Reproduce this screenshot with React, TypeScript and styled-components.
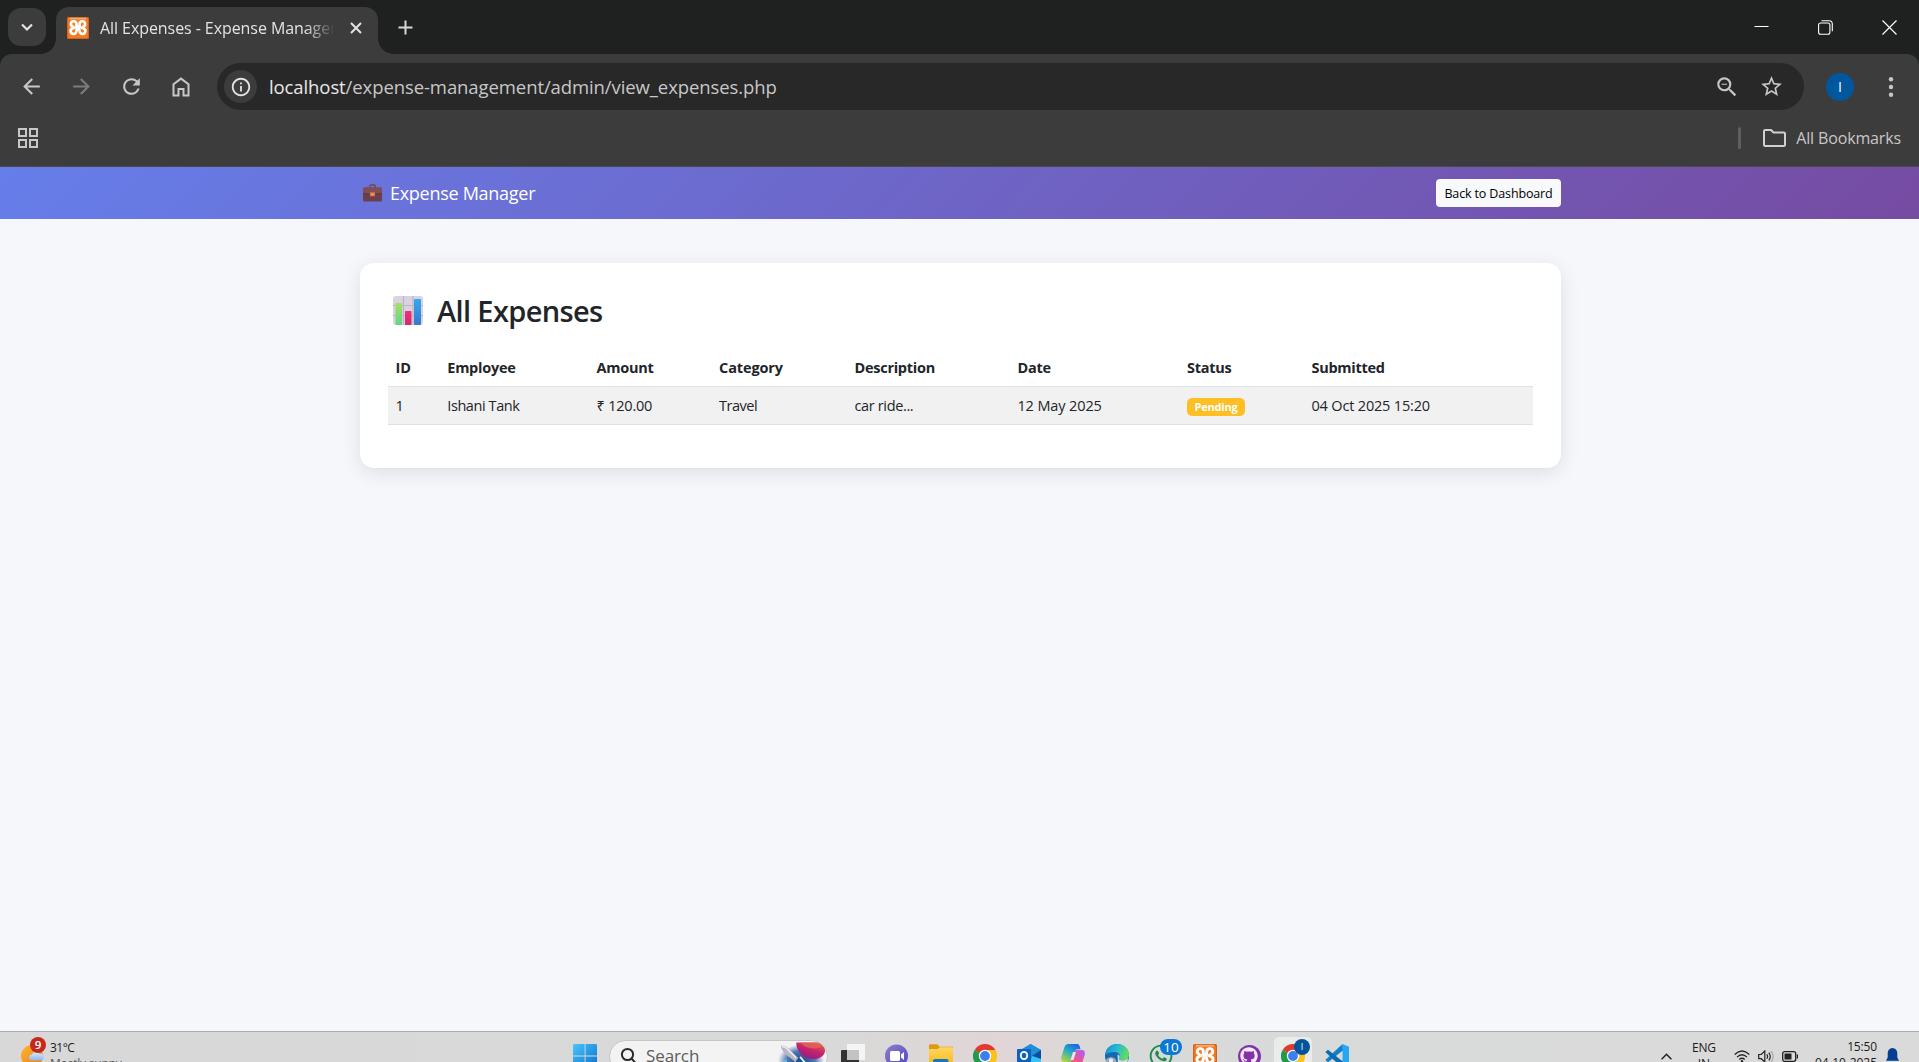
import React from "react";
import styled, { createGlobalStyle, css } from "styled-components";
import { MdArrowBack, MdArrowForward, MdRefresh, MdZoomOut, MdStarBorder, MdInfoOutline } from "react-icons/md";
import { FaGithub, FaWhatsapp } from "react-icons/fa";

const Global = createGlobalStyle`
  * { box-sizing: border-box; }
  body { margin: 0; background: #f5f7fb; font-family: "Open Sans", "Noto Sans", sans-serif; overflow: hidden; }
`;
const Screen = styled.div`
  display: flex; flex-direction: column; width: 1919px; height: 1062px; overflow: hidden;
`;
const Text = styled.span<{ $size: number; $ls?: number; $color?: string; $weight?: number }>`
  font-size: ${p => p.$size}px;
  letter-spacing: ${p => p.$ls ?? 0}px;
  color: ${p => p.$color ?? "inherit"};
  font-weight: ${p => p.$weight ?? 400};
  white-space: nowrap;
`;

/* ---------- browser chrome ---------- */
const TabStrip = styled.div`
  display: flex; height: 54px; flex: none; background: #1f2120; padding: 7px 0 0 8px; color: #e3e3e3;
`;
const TabSearch = styled.div`
  width: 38px; height: 38px; margin-top: 1px; border-radius: 13px; background: #3c3c3c;
  display: flex; align-items: center; justify-content: center;
`;
const Tab = styled.div`
  position: relative; width: 322px; height: 47px; margin-left: 10px; padding: 0 16px 6px 11px; background: #3c3c3c;
  border-radius: 13px 13px 0 0; display: flex; align-items: center;
  &::before, &::after {
    content: ""; position: absolute; bottom: 0; width: 15px; height: 15px;
  }
  &::before { left: -15px; background: radial-gradient(circle at 0 0, transparent 14.5px, #3c3c3c 15px); }
  &::after { right: -15px; background: radial-gradient(circle at 100% 0, transparent 14.5px, #3c3c3c 15px); }
`;
const TabTitle = styled.div`
  width: 233px; margin-left: 11px; overflow: hidden; white-space: nowrap; line-height: 24px;
  mask-image: linear-gradient(90deg, #000 205px, transparent 235px);
`;
const TabClose = styled.div`margin-left: auto; display: flex;`;
const NewTab = styled.div`display: flex; height: 40px; align-items: center; margin-left: 20px;`;
const WindowButtons = styled.div`
  margin-left: auto; display: flex; height: 40px; align-items: center; gap: 49px; padding-right: 22px; color: #fff;
`;
const ToolbarWrap = styled.div`
  flex: none; height: 113px; background: linear-gradient(#1f2120 16px, #3c3c3c 16px);
`;
const ToolbarBody = styled.div`
  height: 113px; background: #3c3c3c; border-radius: 12px 12px 0 0; border-bottom: 1px solid #4a4a4a; padding-top: 9px;
`;
const Toolbar = styled.div`display: flex; align-items: center; height: 47px; color: #c7c7c7;`;
const NavButtons = styled.div`
  display: flex; align-items: center; gap: 25px; width: 217px; padding-left: 18.5px;
  svg:nth-child(2) { color: #7c7c7c; }
`;
const Omnibox = styled.div`
  width: 1587px; height: 47px; border-radius: 24px; background: #282828; display: flex; align-items: center; padding: 0 20px 0 7px;
`;
const SiteInfo = styled.div`
  width: 33px; height: 33px; border-radius: 50%; background: #3c3c3c; color: #e3e3e3; display: flex;
  align-items: center; justify-content: center; margin-right: 12px; padding-left: 1px;
`;
const OmniActions = styled.div`margin-left: auto; display: flex; gap: 19px; align-items: center;`;
const Avatar = styled.div`
  width: 28px; height: 28px; border-radius: 50%; margin-left: 22px; background: #00579e; color: #fff;
  display: flex; align-items: center; justify-content: center;
`;
const Menu = styled.div`display: flex; margin-left: 20px;`;
const Bookmarks = styled.div`
  display: flex; align-items: center; height: 56px; padding: 0 18px; color: #c7c7c7;
`;
const BookmarkRight = styled.div`margin-left: auto; display: flex; align-items: center;`;
const Divider = styled.div`width: 3px; height: 22px; border-radius: 2px; background: #5f5f5f; margin-right: 22px;`;
const BookmarkLabel = styled.div`margin-left: 10.5px; line-height: 24px;`;

/* ---------- page ---------- */
const NavBar = styled.header`
  flex: none; height: 52px; background: linear-gradient(135deg, #667eea 0%, #764ba2 100%);
  display: flex; align-items: center; padding: 0 358px 0 363px;
`;
const Brand = styled.div`display: flex; align-items: center; gap: 8px; color: #fff;`;
const BackButton = styled.button`
  margin-left: auto; width: 125px; height: 28px; border: 0; border-radius: 4px; background: #f8f9fa; color: #000;
  font-family: inherit; padding: 2px 0 0; display: flex; align-items: center; justify-content: center; line-height: 20px;
`;
const Main = styled.main`flex: 1; min-height: 0; padding: 44px 358px 0 360px; color: #212529;`;
const Card = styled.section`
  height: 205px; border-radius: 14px; background: #fff; box-shadow: 0 5px 20px rgba(0, 0, 0, 0.1); padding: 28px;
`;
const Heading = styled.h2`
  display: flex; align-items: center; gap: 14px; margin: 0; height: 40px; padding-left: 5px; line-height: 40px; font-weight: 600;
`;
const Table = styled.div`margin-top: 14px;`;
const Row = styled.div<{ $body?: boolean }>`
  display: grid; grid-template-columns: 51.7px 149.2px 122.6px 135.4px 163px 169.6px 124.4px 1fr;
  height: 38px; align-items: center; border-bottom: 1px solid #dee2e6; padding-left: 7.6px; line-height: 22px;
  ${p => p.$body && css`background: #f1f1f1;`}
  ${p => !p.$body && css`height: 42px; padding-top: 4px;`}
`;
const Badge = styled.div`
  display: flex; width: 58px; height: 18px; margin-top: 3px; border-radius: 5px; background: #fdbf23; color: #fff;
  align-items: center; justify-content: center; line-height: 16px;
`;

/* ---------- taskbar ---------- */
const Taskbar = styled.footer`
  flex: none; height: 31px; overflow: hidden; border-top: 1px solid #a9abac;
  background: linear-gradient(90deg, #d8d8d8 0%, #d8d9d8 44%, #e1d5d6 52%, #d8dad9 59%, #dadada 100%);
`;
const TaskInner = styled.div`display: flex; height: 48px; align-items: center; color: #1b1b1b;`;
const Weather = styled.div`display: flex; width: 573px; padding-left: 20px; gap: 5px; align-items: center;`;
const WeatherIcon = styled.div`position: relative; width: 25px; height: 26px;`;
const WeatherBadge = styled.div`
  position: absolute; left: 10px; top: -6px; width: 16px; height: 16px; border-radius: 50%; background: #c4291c; color: #fff;
  display: flex; align-items: center; justify-content: center; line-height: 14px;
`;
const Stack = styled.div<{ $align?: string; $up?: number }>`
  display: flex; flex-direction: column; line-height: 16px; margin-top: ${p => -(p.$up ?? 1)}px; align-items: ${p => p.$align ?? "flex-start"};
`;
const SearchPill = styled.div`
  width: 219px; height: 33px; margin-left: 12px; border-radius: 17px; background: #f3f3f3; border: 1px solid #c6c6c6;
  display: flex; align-items: center; padding-left: 10px; overflow: hidden; line-height: 24px;
`;
const SearchLabel = styled.div`margin: 0 0 0 10px;`;
const SearchArt = styled.div`margin-left: auto; display: flex;`;
const Apps = styled.div`display: flex; margin-left: 3px;`;
const AppSlot = styled.div<{ $active?: boolean }>`
  position: relative; width: 38px; height: 39px; margin: 0 3px; display: flex; align-items: center; justify-content: center; border-radius: 5px;
  ${p => p.$active && css`background: #ebebea;`}
`;
const AppBadge = styled.div<{ $w: number; $bg: string; $right: number }>`
  position: absolute; right: ${p => p.$right}px; top: 2px; width: ${p => p.$w}px; height: 16px; border-radius: 8px; background: ${p => p.$bg};
  color: #fff; display: flex; align-items: center; justify-content: center; line-height: 14px;
`;
const WhatsappIcon = styled.div`display: flex; color: #1d8a4f;`;
const GithubIcon = styled.div`
  width: 23px; height: 23px; border-radius: 50%; background: #8430ab; color: #f3e9f7; display: flex; align-items: center; justify-content: center;
`;
const Tray = styled.div`display: flex; align-items: center; margin-left: auto; padding-right: 20px;`;
const Gap = styled.div<{ $w: number }>`width: ${p => p.$w}px;`;

/* ---------- drawings ---------- */
const Xampp = ({ s }: { s: number }) => (
  <svg width={s} height={s} viewBox="0 0 24 24">
    <rect width="24" height="24" rx="1.5" fill="#d3641d" />
    <rect x="1.2" y="1.2" width="21.600" height="21.600" rx="1" fill="#f47b20" />
    <rect x="3" y=".8" width="18" height="1.900" fill="#f3a878" />
    <g fill="none" stroke="#fff" strokeWidth="2.900" strokeLinejoin="round">
      <path d="M10.300 10.500V7.600A3 3 0 1 0 6.200 10.400L8 11.700 5.800 12.600A3.100 3.100 0 1 0 10.200 15.400L11 12.500h2l.8 2.900A3.100 3.100 0 1 0 18.200 12.600L16 11.700l1.800-1.300A3 3 0 1 0 13.700 7.600v2.900z" />
    </g>
  </svg>
);
const Chrome = () => (
  <svg width="24" height="24" viewBox="0 0 24 24">
    <path d="M12 12L1.600 6A12 12 0 0 1 22.400 6z" fill="#e03a2f" />
    <path d="M1.600 6A12 12 0 0 0 12 24l5.200-9L12 12z" fill="#229a4b" />
    <path d="M12 6h10.400A12 12 0 0 1 12 24l5.200-9z" fill="#fbc21c" />
    <circle cx="12" cy="12" r="6.200" fill="#fff" /><circle cx="12" cy="12" r="4.900" fill="#3c7ff0" />
  </svg>
);
const Briefcase = () => (
  <svg width="19" height="18" viewBox="0 0 19 18">
    <path d="M6.700 4V2.400Q6.700 1 8 1h3q1.300 0 1.300 1.400V4" fill="none" stroke="#6b4653" strokeWidth="1.300" />
    <rect y="3.500" width="19" height="14" rx="1.500" fill="#6d4049" />
    <path d="M0 5q0-1.500 1.500-1.500h16Q19 3.500 19 5v4.500q-9.500 2-19 0z" fill="#814f53" />
    <path d="M0 9.500q9.500 2 19 0" fill="none" stroke="#5b3440" />
    <rect x="7" y="8.300" width="5" height="4" rx=".6" fill="#d9774f" /><rect x="8.200" y="9.500" width="2.600" height="1.500" fill="#ef9d70" />
  </svg>
);
const BarChart = () => (
  <svg width="30" height="30" viewBox="0 0 30 30">
    <defs>
      <linearGradient id="g" x2="0" y2="1"><stop stopColor="#a8e05f" /><stop offset="1" stopColor="#5fd68c" /></linearGradient>
      <linearGradient id="b" x2="0" y2="1"><stop stopColor="#35a8f2" /><stop offset="1" stopColor="#3a78c9" /></linearGradient>
      <linearGradient id="r" x2="0" y2="1"><stop stopColor="#f0307a" /><stop offset="1" stopColor="#cf2a6c" /></linearGradient>
    </defs>
    <rect width="30" height="29" rx="3" fill="#d9d2e0" />
    <path d="M10.500 0v29M20 0v29M0 9.500h30M0 19.500h30" stroke="#bdb5c6" strokeWidth="1.200" />
    <rect x="2.500" y="7" width="6.500" height="22" rx=".8" fill="url(#g)" />
    <rect x="12" y="15" width="6.500" height="14" rx=".8" fill="url(#r)" />
    <rect x="21" y="3" width="7" height="26" rx=".8" fill="url(#b)" />
  </svg>
);
const SunCloud = () => (
  <svg width="25" height="26" viewBox="0 0 25 26">
    <defs>
      <linearGradient id="sun" x1="0" y1="0" x2="1" y2="1"><stop stopColor="#fcb72e" /><stop offset="1" stopColor="#f0761b" /></linearGradient>
      <linearGradient id="cloud" x2="0" y2="1"><stop stopColor="#dcebfd" /><stop offset="1" stopColor="#8db6ee" /></linearGradient>
    </defs>
    <circle cx="12" cy="13" r="11" fill="url(#sun)" />
    <path d="M12 17.500a3 3 0 0 1 0-6 4.200 4.200 0 0 1 7.600-.8 3.400 3.400 0 0 1 1.400 6.800z" fill="url(#cloud)" />
  </svg>
);
const WindowsLogo = () => (
  <svg width="24" height="24" viewBox="0 0 24 24">
    <defs><linearGradient id="win" x2="1" y2="1"><stop stopColor="#49c6f7" /><stop offset="1" stopColor="#0a6fd0" /></linearGradient></defs>
    <path d="M1.200 0h10.400v11.500H0V1.200Q0 0 1.200 0zM12.500 0h10.300Q24 0 24 1.200v10.300H12.500zM0 12.500h11.600V24H0zM12.500 12.500H24V24H12.500z" fill="url(#win)" />
  </svg>
);
const RocketArt = () => (
  <svg width="50" height="31" viewBox="0 0 52 31">
    <defs>
      <radialGradient id="sky"><stop stopColor="#1c4687" /><stop offset=".6" stopColor="#4d78b5" /><stop offset="1" stopColor="#f3f3f3" /></radialGradient>
      <linearGradient id="planet" x1=".8" y1="0" x2=".2" y2="1"><stop stopColor="#e8603f" /><stop offset=".45" stopColor="#c4246c" /><stop offset="1" stopColor="#8d1a86" /></linearGradient>
    </defs>
    <ellipse cx="25" cy="20" rx="24" ry="17" fill="url(#sky)" />
    <path d="M20 1h24q6 4 6 9-1 6-9 8-10 1-16-5-5-5-5-12z" fill="url(#planet)" />
    <path d="M24 1q8 9 22 5l-2-5z" fill="#e2655c" opacity=".75" />
    <path d="M4 4q6 0 10 5l8 8-3 4-9-7Q4 9 4 4z" fill="#b9b6c2" /><path d="M5 5q5 1 8 5l7 7" stroke="#ececf2" strokeWidth="1.500" fill="none" />
    <path d="M18 21l7 8M24 16l6 7" stroke="#e7ecf5" strokeWidth="2" />
    <circle cx="9" cy="20" r="1.500" fill="#5fc0c9" />
  </svg>
);
const TaskView = () => (
  <svg width="24" height="24" viewBox="0 0 24 24">
    <rect y="6" width="18" height="18" rx="1" fill="#333" /><rect x="6" width="18" height="16" rx="1" fill="#f5f5f5" />
    <rect x="6" y="6" width="12" height="10" fill="#c3c3c3" />
  </svg>
);
const VideoChat = () => (
  <svg width="24" height="24" viewBox="0 0 24 24">
    <defs><linearGradient id="vc" x2="1" y2="1"><stop stopColor="#8d7fcf" /><stop offset="1" stopColor="#4f46c0" /></linearGradient></defs>
    <circle cx="11.500" cy="12" r="11.500" fill="url(#vc)" /><rect x="5" y="7" width="10" height="10" rx="1.500" fill="#fff" /><path d="M16 10.500l3-2.500v8l-3-2.500z" fill="#fff" />
  </svg>
);
const Explorer = () => (
  <svg width="24" height="24" viewBox="0 0 24 24">
    <defs><linearGradient id="fo" x2="0" y2="1"><stop stopColor="#ffd75e" /><stop offset="1" stopColor="#f8b91f" /></linearGradient></defs>
    <path d="M0 1.500Q0 .2 1.300 .2h7l2.500 2.500H24v6H0z" fill="#dc9b12" />
    <path d="M0 6q0-1 1-1h7.500l2.300-1.800H23q1 0 1 1V21H0z" fill="url(#fo)" />
    <path d="M4 21v-4q0-2 2-2h11.500q2 0 2 2v4z" fill="#1777bb" />
  </svg>
);
const Outlook = () => (
  <svg width="24" height="24" viewBox="0 0 24 24">
    <path d="M5 5l8.500-5L24 6v15H5z" fill="#1b8ad6" /><path d="M13.500 0L24 6l-9 6-9-6z" fill="#1f8fdc" />
    <path d="M15 12l9-6v9z" fill="#0c4e9c" /><path d="M15 12l9 3v8H12z" fill="#35c1f2" />
    <rect y="5" width="14" height="14" rx="1" fill="#0a63be" />
    <ellipse cx="7" cy="11.500" rx="3.200" ry="3.600" fill="none" stroke="#fff" strokeWidth="1.900" />
  </svg>
);
const Copilot = () => (
  <svg width="24" height="24" viewBox="0 0 24 24">
    <defs>
      <linearGradient id="cpA" x1="0.800" y1="0" x2="0.200" y2="1"><stop stopColor="#1a62e0" /><stop offset=".45" stopColor="#21a9c9" /><stop offset="1" stopColor="#b7d53b" /></linearGradient>
      <linearGradient id="cpB" x1=".8" y1="0" x2=".2" y2="1"><stop stopColor="#b05ff0" /><stop offset=".5" stopColor="#f0528f" /><stop offset="1" stopColor="#fb9a4a" /></linearGradient>
    </defs>
    <path d="M7.500 0h8.500q2 0 2.700 2.200l.8 3h-3q-2 0-2.700 2.300l-2.500 8Q10.500 18 8.500 18H3.300Q-.7 18 .3 13L3.500 3Q4.500 0 7.500 0z" fill="url(#cpA)" />
    <path d="M16.500 24H8q-2 0-2.700-2.200l-.8-3h3q2 0 2.700-2.300l2.500-8Q13.500 6 15.500 6h5.200q4 0 3 5l-3.200 10q-1 3-4 3z" fill="url(#cpB)" />
    <path d="M12 8h3l-2.500 8h-3z" fill="#e9e5ea" />
  </svg>
);
const Edge = () => (
  <svg width="24" height="24" viewBox="0 0 24 24">
    <defs><linearGradient id="ed" x2="1" y2=".3"><stop stopColor="#1688d8" /><stop offset=".55" stopColor="#27bcd2" /><stop offset="1" stopColor="#5edc62" /></linearGradient></defs>
    <circle cx="12" cy="12" r="12" fill="#1368b4" />
    <path d="M0 11C1 4 6 0 12 0c7 0 12 5 12 10.500 0 4-3 6-6.500 6-3 0-4-1.200-3.300-2.500 1.600-2.600-.2-6-4.700-6C4.500 8 1.500 9.500 0 11z" fill="url(#ed)" />
    <path d="M12.500 10.500c3 1 2 3 1.700 3.500-.7 1.300.3 2.500 3.300 2.500 2.500 0 4.500-1 5.700-2.500l-2 10h-8z" fill="#d8dada" />
    <circle cx="6" cy="18.500" r="5.500" fill="#a6a9ab" /><circle cx="6" cy="16.500" r="2" fill="#f2f2f2" />
  </svg>
);
const VsCode = () => (
  <svg width="24" height="24" viewBox="0 0 24 24">
    <path d="M17.500 0L24 2.800v18.400L17.500 24z" fill="#27a6f1" />
    <path d="M17.800 6.500L3 18.300.3 16 17.500 0z" fill="#1080cb" /><path d="M17.800 17.500L3 5.700.3 8 17.500 24z" fill="#0a6db4" />
  </svg>
);

const bodyCells: [string, number][] = [
  ["1", 0], ["Ishani Tank", -0.42], ["₹ 120.00", -0.2], ["Travel", -0.5], ["car ride...", -0.35], ["12 May 2025", -0.12],
];

export default function App() {
  return (
    <Screen>
      <Global />
      <TabStrip>
        <TabSearch>
          <svg width="14" height="14" viewBox="0 0 14 14" fill="none" stroke="#e3e3e3" strokeWidth="2.200"><path d="M2 4.500l5 5 5-5" /></svg>
        </TabSearch>
        <Tab>
          <Xampp s={22} />
          <TabTitle><Text $size={16} $ls={-0.07}>All Expenses - Expense Manager</Text></TabTitle>
          <TabClose><svg width="12" height="12" viewBox="0 0 12 12" stroke="#e3e3e3" strokeWidth="2"><path d="M1 1l10 10M11 1L1 11" /></svg></TabClose>
        </Tab>
        <NewTab><svg width="15" height="15" viewBox="0 0 15 15" stroke="#d8d8d8" strokeWidth="2"><path d="M7.500 .5v14M.5 7.500h14" /></svg></NewTab>
        <WindowButtons>
          <svg width="15" height="15" viewBox="0 0 15 15" stroke="#fff"><path d="M.5 6.500h14" /></svg>
          <svg width="15" height="15" viewBox="0 0 15 15" fill="none" stroke="#fff" strokeWidth="1.100"><rect x=".6" y="3" width="11.300" height="11.300" rx="2" /><path d="M3.500 .7h7.500q3.300 0 3.300 3.300v7.300" /></svg>
          <svg width="15" height="15" viewBox="0 0 15 15" stroke="#fff" strokeWidth="1.200"><path d="M.5 .5l14 14M14.500 .5l-14 14" /></svg>
        </WindowButtons>
      </TabStrip>
      <ToolbarWrap>
        <ToolbarBody>
          <Toolbar>
            <NavButtons>
              <MdArrowBack size={25} /><MdArrowForward size={25} /><MdRefresh size={25} />
              <svg width="24" height="24" viewBox="0 0 24 24" fill="none" stroke="currentColor" strokeWidth="2"><path d="M4.500 20.500V9.300L12 3.600l7.500 5.700v11.200h-5v-6.500h-5v6.500z" /></svg>
            </NavButtons>
            <Omnibox>
              <SiteInfo><MdInfoOutline size={22} /></SiteInfo>
              <Text $size={18.5} $ls={-0.1} $color="#e8e8e8">localhost</Text>
              <Text $size={18.5} $ls={-0.09} $color="#c7c7c7">/expense-management/admin/view_expenses.php</Text>
              <OmniActions><MdZoomOut size={26} /><MdStarBorder size={25} /></OmniActions>
            </Omnibox>
            <Avatar><Text $size={14}>I</Text></Avatar>
            <Menu><svg width="32" height="20" viewBox="0 0 32 20" fill="#c7c7c7"><circle cx="17" cy="2.200" r="2.200" /><circle cx="17" cy="10" r="2.200" /><circle cx="17" cy="17.800" r="2.200" /></svg></Menu>
          </Toolbar>
          <Bookmarks>
            <svg width="20" height="20" viewBox="0 0 20 20" fill="none" stroke="#c7c7c7" strokeWidth="2"><path d="M1 1h7v7H1zM12 1h7v7h-7zM1 12h7v7H1zM12 12h7v7h-7z" /></svg>
            <BookmarkRight>
              <Divider />
              <svg width="23" height="18" viewBox="0 0 23 18" fill="none" stroke="#d0d0d0" strokeWidth="2" strokeLinejoin="round"><path d="M2.200 1h5.800l2.500 2.500h10.300q1.200 0 1.200 1.200V15.800q0 1.200-1.200 1.200H2.200Q1 17 1 15.800V2.200Q1 1 2.200 1z" /></svg>
              <BookmarkLabel><Text $size={16} $ls={-0.14}>All Bookmarks</Text></BookmarkLabel>
            </BookmarkRight>
          </Bookmarks>
        </ToolbarBody>
      </ToolbarWrap>

      <NavBar>
        <Brand><Briefcase /><Text $size={18} $ls={-0.28}>Expense Manager</Text></Brand>
        <BackButton><Text $size={12.5} $ls={-0.14}>Back to Dashboard</Text></BackButton>
      </NavBar>
      <Main>
        <Card>
          <Heading><BarChart /><Text $size={29} $ls={-0.63} $weight={600}>All Expenses</Text></Heading>
          <Table>
            <Row>
              {["ID", "Employee", "Amount", "Category", "Description", "Date", "Status", "Submitted"].map(h => (
                <div key={h}><Text $size={14.5} $ls={h === "Category" ? -0.13 : -0.26} $weight={700}>{h}</Text></div>
              ))}
            </Row>
            <Row $body>
              {bodyCells.map(([c, ls]) => (
                <div key={c}><Text $size={14.5} $ls={ls}>{c}</Text></div>
              ))}
              <Badge><Text $size={11} $ls={-0.2} $weight={700}>Pending</Text></Badge>
              <div><Text $size={14.5} $ls={-0.17}>04 Oct 2025 15:20</Text></div>
            </Row>
          </Table>
        </Card>
      </Main>

      <Taskbar>
        <TaskInner>
          <Weather>
            <WeatherIcon><SunCloud /><WeatherBadge><Text $size={11.5} $weight={600}>9</Text></WeatherBadge></WeatherIcon>
            <Stack><Text $size={12} $ls={-0.5}>31°C</Text><Text $size={12} $ls={-0.2} $color="#555">Mostly sunny</Text></Stack>
          </Weather>
          <WindowsLogo />
          <SearchPill>
            <svg width="16" height="18" viewBox="0 0 16 18" fill="none" stroke="#2b2b2b" strokeWidth="2"><circle cx="7.500" cy="7.500" r="5.600" /><path d="M11.500 11.500l4 4.500" /></svg>
            <SearchLabel><Text $size={17} $ls={-0.1} $color="#5c5c5c">Search</Text></SearchLabel>
            <SearchArt><RocketArt /></SearchArt>
          </SearchPill>
          <Apps>
            <AppSlot><TaskView /></AppSlot>
            <AppSlot><VideoChat /></AppSlot>
            <AppSlot><Explorer /></AppSlot>
            <AppSlot><Chrome /></AppSlot>
            <AppSlot><Outlook /></AppSlot>
            <AppSlot><Copilot /></AppSlot>
            <AppSlot><Edge /></AppSlot>
            <AppSlot>
              <WhatsappIcon><FaWhatsapp size={26} /></WhatsappIcon>
              <AppBadge $w={22} $bg="#0b78d4" $right={-2}><Text $size={13.5}>10</Text></AppBadge>
            </AppSlot>
            <AppSlot><Xampp s={24} /></AppSlot>
            <AppSlot><GithubIcon><FaGithub size={18} /></GithubIcon></AppSlot>
            <AppSlot $active>
              <Chrome />
              <AppBadge $w={16} $bg="#04549b" $right={2}><Text $size={9}>I</Text></AppBadge>
            </AppSlot>
            <AppSlot><VsCode /></AppSlot>
          </Apps>
          <Tray>
            <svg width="11" height="7" viewBox="0 0 11 7" fill="none" stroke="#222" strokeWidth="1.500"><path d="M.6 6.200l4.900-5 4.900 5" /></svg>
            <Gap $w={20.5} />
            <Stack $align="center"><Text $size={12} $ls={-0.2}>ENG</Text><Text $size={12}>IN</Text></Stack>
            <Gap $w={18} />
            <svg width="16" height="13" viewBox="0 0 16 13" fill="none" stroke="#222" strokeWidth="1.300"><path d="M.7 4.500q7.300-7 14.600 0M3 7.100q5-4.800 10 0M5.300 9.500q2.700-2.500 5.400 0" /><circle cx="8" cy="11.300" r="1.200" fill="#222" stroke="none" /></svg>
            <Gap $w={8} />
            <svg width="16" height="13" viewBox="0 0 16 13" fill="none" stroke="#222" strokeWidth="1.200"><path d="M.7 4.500h2.500L6.800 1v11L3.200 8.700H.7zM8.800 4.300q1.600 2.200 0 4.400M10.800 2.700q3 3.800 0 7.600" /><path d="M13 1q4.500 5.500 0 11" stroke="#aaa" /></svg>
            <Gap $w={8} />
            <svg width="17" height="11" viewBox="0 0 17 11"><rect x=".7" y=".7" width="13" height="9.600" rx="2" fill="none" stroke="#222" strokeWidth="1.300" /><rect x="2.500" y="2.500" width="7" height="6" rx=".6" fill="#222" /><path d="M14.800 3.500h1.200v4h-1.200z" fill="#222" /></svg>
            <Gap $w={16} />
            <Stack $align="flex-end" $up={2}><Text $size={12} $ls={-0.15}>15:50</Text><Text $size={12} $ls={-0.05}>04-10-2025</Text></Stack>
            <Gap $w={9} />
            <svg width="13" height="17" viewBox="0 0 13 17" fill="#043f92"><path d="M6.500 0Q11 .3 11.300 5v4.500l1.700 3.300H0l1.700-3.300V5Q2 .3 6.500 0zM4.300 14h4.400q-.5 2-2.200 2t-2.200-2z" /></svg>
          </Tray>
        </TaskInner>
      </Taskbar>
    </Screen>
  );
}
